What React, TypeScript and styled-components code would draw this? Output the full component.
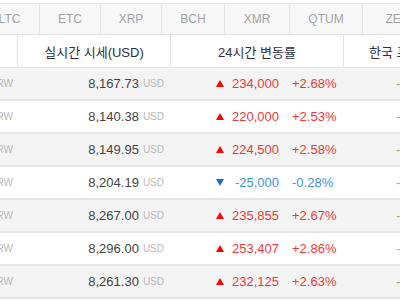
import styled, { createGlobalStyle } from 'styled-components';

interface IRow {
  krw: string;
  usd: string;
  diff: string;
  rate: string;
  up: boolean;
}

const TABS = [
  { name: 'LTC', w: 60 },
  { name: 'ETC', w: 61 },
  { name: 'XRP', w: 61 },
  { name: 'BCH', w: 63 },
  { name: 'XMR', w: 65 },
  { name: 'QTUM', w: 73 },
  { name: 'ZEC', w: 70 },
];

const ROWS: IRow[] = [
  { krw: '9,348,000', usd: '8,167.73', diff: '234,000', rate: '+2.68%', up: true },
  { krw: '9,320,000', usd: '8,140.38', diff: '220,000', rate: '+2.53%', up: true },
  { krw: '9,327,500', usd: '8,149.95', diff: '224,500', rate: '+2.58%', up: true },
  { krw: '9,010,000', usd: '8,204.19', diff: '-25,000', rate: '-0.28%', up: false },
  { krw: '9,061,855', usd: '8,267.00', diff: '235,855', rate: '+2.67%', up: true },
  { krw: '9,106,407', usd: '8,296.00', diff: '253,407', rate: '+2.86%', up: true },
  { krw: '9,060,125', usd: '8,261.30', diff: '232,125', rate: '+2.63%', up: true },
];

export default function App() {
  return (
    <>
      <GlobalStyle />
      <Page>
        <TabBar>
          {TABS.map((tab) => (
            <Tab key={tab.name} $w={tab.w}>
              {tab.name}
            </Tab>
          ))}
        </TabBar>
        <HeaderRow>
          <HeadCell />
          <HeadCell>실시간 시세(USD)</HeadCell>
          <HeadCell>24시간 변동률</HeadCell>
          <HeadCell $left>한국 프리미엄</HeadCell>
        </HeaderRow>
        {ROWS.map((row, i) => (
          <Row key={i} $odd={i % 2 === 0}>
            <KrwCell>
              <span>{row.krw}</span>
              <Unit>KRW</Unit>
            </KrwCell>
            <PriceCell>
              {row.usd}
              <Unit>USD</Unit>
            </PriceCell>
            <ChangeCell $up={row.up}>
              <Arrow $up={row.up} />
              <Diff>{row.diff}</Diff>
              <Rate>{row.rate}</Rate>
            </ChangeCell>
            <PremiumCell>-</PremiumCell>
          </Row>
        ))}
      </Page>
    </>
  );
}

const GlobalStyle = createGlobalStyle`
  body {
    margin: 0;
    background: #fff;
    font-family: "Liberation Sans", "Noto Sans CJK KR", sans-serif;
  }
`;

const Page = styled.div`
  width: 400px;
  height: 300px;
  padding-top: 3px;
  box-sizing: border-box;
  overflow: hidden;
`;

const TabBar = styled.div`
  display: flex;
  height: 30px;
  margin-left: -20px;
  background: #f8f8f8;
  border-top: 1px solid #e4e4e4;
  border-bottom: 1px solid #e4e4e4;
`;

const Tab = styled.div<{ $w: number }>`
  flex: none;
  width: ${(p) => p.$w}px;
  box-sizing: border-box;
  border-right: 1px solid #e4e4e4;
  text-align: center;
  line-height: 30px;
  font-size: 12px;
  color: #a3a3a3;
`;

const columns = '18px 153px 173px 140px';

const HeaderRow = styled.div`
  display: grid;
  grid-template-columns: ${columns};
  height: 32px;
  background: #fff;
  border-bottom: 1px solid #e4e4e4;
`;

const HeadCell = styled.div<{ $left?: boolean }>`
  display: flex;
  align-items: center;
  justify-content: ${(p) => (p.$left ? 'flex-start' : 'center')};
  padding-left: ${(p) => (p.$left ? '25px' : '0')};
  border-right: 1px solid #e4e4e4;
  font-size: 13px;
  color: #2e2e48;
  white-space: nowrap;
  overflow: hidden;
`;

const Row = styled.div<{ $odd: boolean }>`
  display: grid;
  grid-template-columns: ${columns};
  height: 31px;
  background: ${(p) => (p.$odd ? '#f4f4f4' : '#fff')};
  border-bottom: 2px solid #e6e6e6;
  font-size: 13px;
  white-space: nowrap;
`;

const KrwCell = styled.div`
  display: flex;
  align-items: center;
  justify-content: flex-end;
  padding-right: 5px;
  overflow: hidden;
  color: #444;
`;

const Unit = styled.span`
  margin-left: 4px;
  font-size: 10px;
  color: #b8b8b8;
`;

const PriceCell = styled.div`
  display: flex;
  align-items: center;
  justify-content: flex-end;
  padding-right: 7px;
  color: #444;
`;

const ChangeCell = styled.div<{ $up: boolean }>`
  display: flex;
  align-items: center;
  padding-left: 45px;
  color: ${(p) => (p.$up ? '#f03a3a' : '#3f92e8')};
`;

const Arrow = styled.span<{ $up: boolean }>`
  width: 0;
  height: 0;
  border-left: 4.5px solid transparent;
  border-right: 4.5px solid transparent;
  ${(p) =>
    p.$up
      ? 'border-bottom: 7px solid #f00;'
      : 'border-top: 7px solid #1a6fd6;'}
`;

const Diff = styled.span`
  width: 55px;
  text-align: right;
`;

const Rate = styled.span`
  margin-left: 13px;
`;

const PremiumCell = styled.div`
  display: flex;
  align-items: center;
  padding-left: 52px;
  font-size: 13px;
  color: #7dbf7d;
`;
